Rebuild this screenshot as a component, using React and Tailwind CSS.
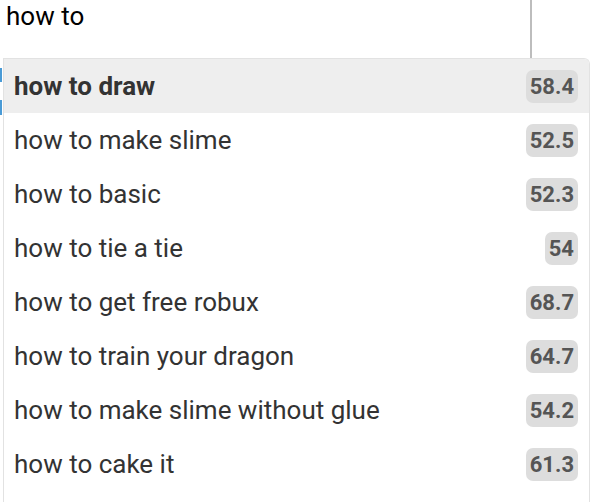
import React from 'react';

const suggestions = [
    { text: 'how to draw', score: '58.4' },
    { text: 'how to make slime', score: '52.5' },
    { text: 'how to basic', score: '52.3' },
    { text: 'how to tie a tie', score: '54' },
    { text: 'how to get free robux', score: '68.7' },
    { text: 'how to train your dragon', score: '64.7' },
    { text: 'how to make slime without glue', score: '54.2' },
    { text: 'how to cake it', score: '61.3' },
];

const App = () => {
    const active = 0;

    return (
        <div className="w-[592px] h-[502px] overflow-hidden bg-white font-['Roboto',sans-serif]">
            <div className="w-[532px] h-[58px] border-r-2 border-[#bdbdbd] pl-[6px] text-[26px] leading-[32px] text-black">
                how to
            </div>

            <div className="flex">
                <div className="w-[3px] flex flex-col">
                    <div className="h-[10px]" />
                    <div className="h-[14px] w-[2px] bg-[#4a9bd6]" />
                    <div className="h-[18px]" />
                    <div className="h-[15px] w-[2px] bg-[#4a9bd6]" />
                </div>

                <div className="w-[587px] h-[460px] border border-b-0 border-[#e2e2e2] rounded-tr-[6px] bg-white overflow-hidden">
                    {suggestions.map((s, i) => (
                        <div
                            key={s.text}
                            className={`flex items-center justify-between h-[54px] pl-[10px] pr-[11px] ${i === active ? 'bg-[#eeeeee]' : ''}`}
                        >
                            <span className={`text-[26px] text-[#333333] ${i === active ? 'font-bold' : ''}`}>
                                {s.text}
                            </span>
                            <span className="px-[4px] h-[33px] leading-[33px] rounded-[7px] bg-[#dddddd] text-[22px] font-bold text-[#555555]">
                                {s.score}
                            </span>
                        </div>
                    ))}
                </div>
            </div>
        </div>
    );
};

export default App;
